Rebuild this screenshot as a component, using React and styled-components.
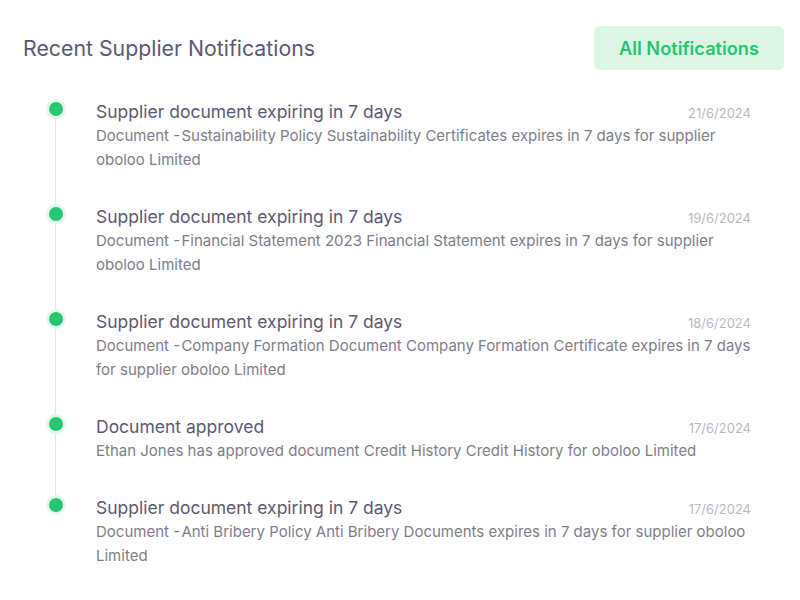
import React from 'react';
import styled, { createGlobalStyle } from 'styled-components';

const GlobalStyle = createGlobalStyle`
  body {
    margin: 0;
    background: #fff;
    font-family: Inter, "Noto Sans", sans-serif;
  }
`;

const Card = styled.section`
  padding: 26px 16px 20px 23px;
`;

const Header = styled.header`
  display: flex;
  align-items: center;
  justify-content: space-between;
  margin-bottom: 30px;
`;

const Title = styled.h2`
  margin: 0;
  font-size: 21.3px;
  font-weight: 400;
  color: #5e5873;
`;

const Button = styled.button`
  width: 190px;
  height: 44px;
  border: none;
  border-radius: 6px;
  background: #dcf6e6;
  color: #28c76f;
  font-family: inherit;
  font-size: 18.2px;
  font-weight: 600;
  cursor: pointer;
`;

const Timeline = styled.ul`
  list-style: none;
  margin: 0;
  padding: 0 30px 0 32px;
`;

const Item = styled.li`
  position: relative;
  padding: 0 0 33px 40px;
  border-left: 1px solid ${p => (p.last ? 'transparent' : '#e6e4ec')};
`;

const Dot = styled.span`
  position: absolute;
  left: -7.5px;
  top: 2px;
  width: 14px;
  height: 14px;
  border-radius: 50%;
  background: #28c76f;
  box-shadow: 0 0 0 3px #e2f8eb;
`;

const Row = styled.div`
  display: flex;
  justify-content: space-between;
  align-items: baseline;
`;

const ItemTitle = styled.h3`
  margin: 0;
  font-size: 17.5px;
  line-height: 24px;
  font-weight: 400;
  color: #5e5873;
`;

const Date = styled.span`
  margin-right: 3px;
  font-size: 13px;
  color: #b9b9c3;
`;

const Desc = styled.p`
  margin: 0;
  font-size: 15px;
  line-height: 24px;
  color: #7f7d8a;
`;

const notifications = [
  {
    title: 'Supplier document expiring in 7 days',
    date: '21/6/2024',
    text: 'Document -\u200aSustainability Policy Sustainability Certificates expires in 7 days for supplier oboloo Limited',
  },
  {
    title: 'Supplier document expiring in 7 days',
    date: '19/6/2024',
    text: 'Document -\u200aFinancial Statement 2023 Financial Statement expires in 7 days for supplier oboloo Limited',
  },
  {
    title: 'Supplier document expiring in 7 days',
    date: '18/6/2024',
    text: 'Document -\u200aCompany Formation Document Company Formation Certificate expires in 7 days for supplier oboloo Limited',
  },
  {
    title: 'Document approved',
    date: '17/6/2024',
    text: 'Ethan Jones has approved document Credit History Credit History for oboloo Limited',
  },
  {
    title: 'Supplier document expiring in 7 days',
    date: '17/6/2024',
    text: 'Document -\u200aAnti Bribery Policy Anti Bribery Documents expires in 7 days for supplier oboloo Limited',
  },
];

export default function App() {
  return (
    <>
      <GlobalStyle />
      <Card>
        <Header>
          <Title>Recent Supplier Notifications</Title>
          <Button>All Notifications</Button>
        </Header>
        <Timeline>
          {notifications.map((n, i) => (
            <Item key={i} last={i === notifications.length - 1}>
              <Dot />
              <Row>
                <ItemTitle>{n.title}</ItemTitle>
                <Date>{n.date}</Date>
              </Row>
              <Desc>{n.text}</Desc>
            </Item>
          ))}
        </Timeline>
      </Card>
    </>
  );
}
